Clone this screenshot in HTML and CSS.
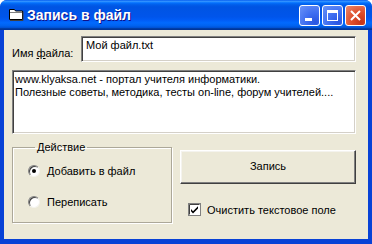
FILE: index.html
```html
<!DOCTYPE html>
<html lang="ru">
<head>
    <meta charset="UTF-8" />
    <title>Запись в файл</title>
    <link rel="stylesheet" href="styles.css">
</head>
<body>
    <div class="window">
        <div class="title-bar">
            <svg class="title-icon" width="16" height="16" viewBox="0 0 16 16">
                <path d="M1.5 3.5h5l1 1.5h7v8.5h-13z" fill="#fff" stroke="#000"/>
                <path d="M2 6.5h12" stroke="#808080"/>
                <path d="M2 14.5h13v-9" stroke="#404040" fill="none"/>
            </svg>
            <span class="title-text">Запись в файл</span>
            <div class="title-buttons">
                <button class="tb-btn"><span class="ico-min"></span></button>
                <button class="tb-btn"><span class="ico-max"></span></button>
                <button class="tb-btn tb-close">
                    <svg width="13" height="13" viewBox="0 0 13 13">
                        <path d="M2 2l9 9M11 2l-9 9" stroke="#fff" stroke-width="2"/>
                    </svg>
                </button>
            </div>
        </div>

        <div class="client">
            <div class="file-row">
                <label class="file-label">Имя <u>ф</u>айла:</label>
                <div class="field file-input">Мой файл.txt</div>
            </div>

            <div class="field text-area">www.klyaksa.net - портал учителя информатики.<br>Полезные советы, методика, тесты on-line, форум учителей....</div>

            <div class="bottom-row">
                <fieldset class="group">
                    <legend>Действие</legend>
                    <div class="radio-row">
                        <span class="radio checked"></span>
                        <span>Добавить в файл</span>
                    </div>
                    <div class="radio-row second">
                        <span class="radio"></span>
                        <span>Переписать</span>
                    </div>
                </fieldset>

                <div class="right-col">
                    <button class="push-btn">Запись</button>
                    <div class="check-row">
                        <svg class="check" width="13" height="13" viewBox="0 0 13 13">
                            <rect x="0.5" y="0.5" width="12" height="12" fill="#fff" stroke="#808080"/>
                            <path d="M1.5 11.5v-10h10" stroke="#404040" fill="none"/>
                            <path d="M3 6l2 2.2L10 3.2v2.2L5 10.4 3 8.2z" fill="#000"/>
                        </svg>
                        <span>Очистить текстовое поле</span>
                    </div>
                </div>
            </div>
        </div>
    </div>
</body>
</html>
```

FILE: styles.css
```css
* {
    box-sizing: border-box;
}
body {
    margin: 0;
    background: #fff;
    font-family: "Liberation Sans", Arial, sans-serif;
    font-size: 11px;
    color: #000;
}
.window {
    width: 372px;
    height: 244px;
    display: flex;
    flex-direction: column;
    background: #0842d6;
    border-radius: 7px 7px 0 0;
    overflow: hidden;
}
.title-bar {
    height: 30px;
    display: flex;
    align-items: center;
    padding: 0 6px 0 8px;
    background: linear-gradient(180deg, #0058ee 0%, #3593ff 4%, #288eff 6%, #127dff 8%, #036ffc 10%, #0262ee 14%, #0057e5 20%, #0054e3 24%, #0055eb 56%, #005bf5 66%, #026afe 76%, #0062ef 86%, #0052d6 92%, #0040ab 94%, #003092 100%);
}
.title-icon {
    flex: none;
    margin-top: -2px;
}
.title-text {
    margin-left: 3px;
    color: #fff;
    font-weight: bold;
    font-size: 14px;
    text-shadow: 1px 1px #0f1089;
}
.title-buttons {
    margin-left: auto;
    display: flex;
    gap: 2px;
}
.tb-btn {
    width: 21px;
    height: 21px;
    padding: 0;
    border: 1px solid #fff;
    border-radius: 3px;
    background: radial-gradient(circle at 80% 85%, #2a55e0 0%, #3d6cf0 40%, #6a93f8 100%);
    display: flex;
    align-items: center;
    justify-content: center;
    position: relative;
}
.ico-min {
    width: 7px;
    height: 3px;
    background: #fff;
    margin-top: 8px;
    margin-right: 3px;
}
.ico-max {
    width: 11px;
    height: 11px;
    border: 1px solid #fff;
    border-top-width: 3px;
}
.tb-close {
    background: radial-gradient(circle at 80% 85%, #c4341a 0%, #de4f2c 45%, #ec8a6e 100%);
}
.client {
    flex: 1;
    margin: 0 4px 5px 4px;
    background: #ece9d8;
    padding: 6px 12px 0 8px;
    display: flex;
    flex-direction: column;
}
.field {
    background: #fff;
    border: 1px solid;
    border-color: #808080 #fff #fff #808080;
    box-shadow: inset 1px 1px #404040, inset -1px -1px #d4d0c8;
    line-height: 13px;
}
.file-row {
    display: flex;
    height: 26px;
}
.file-label {
    width: 69px;
    padding-top: 11px;
    line-height: 13px;
}
.file-input {
    flex: 1;
    padding: 2px 4px;
}
.text-area {
    margin-top: 8px;
    height: 64px;
    padding: 2px 2px;
}
.bottom-row {
    display: flex;
    margin-top: 7px;
}
.group {
    width: 160px;
    height: 82px;
    margin: 0;
    padding: 0 0 0 15px;
    border: 1px solid #aca899;
    box-shadow: inset 1px 1px #fff, 1px 1px #fff;
}
.group legend {
    margin-left: 7px;
    padding: 0 2px;
    line-height: 13px;
}
.radio-row {
    display: flex;
    align-items: center;
    gap: 7px;
    height: 13px;
    margin-top: 10px;
}
.radio-row.second {
    margin-top: 18px;
}
.radio {
    width: 12px;
    height: 12px;
    border-radius: 50%;
    background: #fff;
    border: 1px solid;
    border-color: #808080 #f4f3ee #f4f3ee #808080;
    box-shadow: inset 1px 1px #404040;
    position: relative;
}
.radio.checked::after {
    content: "";
    position: absolute;
    left: 3px;
    top: 3px;
    width: 4px;
    height: 4px;
    border-radius: 50%;
    background: #000;
}
.right-col {
    margin-left: 8px;
    flex: 1;
    display: flex;
    flex-direction: column;
}
.push-btn {
    margin-top: 9px;
    height: 34px;
    font-family: inherit;
    font-size: 11px;
    background: #ece9d8;
    border: 1px solid;
    border-color: #fff #404040 #404040 #fff;
    box-shadow: inset -1px -1px #808080, inset 1px 1px #f4f3ee;
    padding: 0 0 3px;
}
.check-row {
    display: flex;
    align-items: center;
    gap: 6px;
    margin-top: 19px;
    margin-left: 8px;
    height: 13px;
}
.check {
    flex: none;
}
```
